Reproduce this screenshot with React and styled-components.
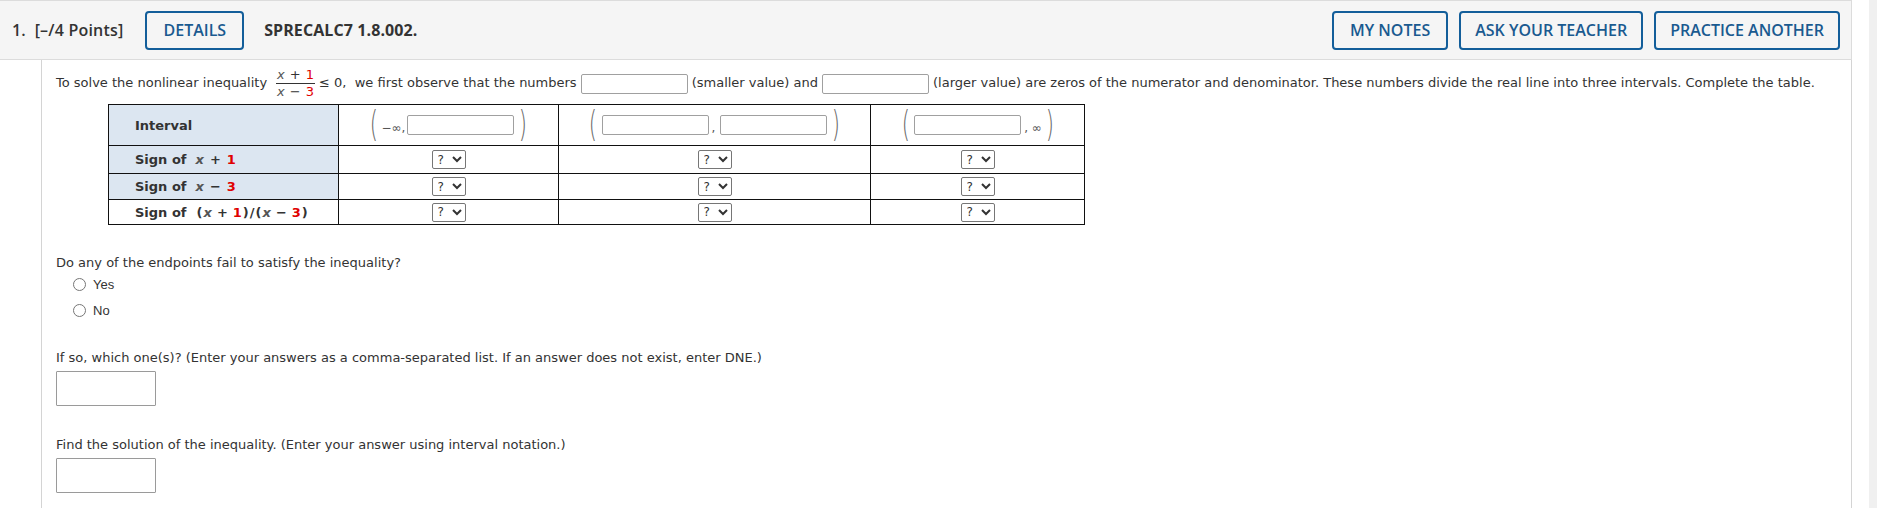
import React from 'react';
import styled, { createGlobalStyle } from 'styled-components';

const GlobalStyle = createGlobalStyle`
  html, body { margin: 0; padding: 0; background: #fff; }
  body { font-family: "DejaVu Sans", Verdana, sans-serif; color: #333; }
`;

const Page = styled.div`
  display: flex;
  width: 1877px;
  height: 508px;
  overflow: hidden;
`;

const Main = styled.div`
  width: 1852px;
  display: flex;
  flex-direction: column;
`;

const Gutter = styled.div`
  width: 17px;
`;

const ScrollStrip = styled.div`
  width: 8px;
  background: #f0f0f0;
`;

const Header = styled.header`
  height: 58px;
  flex: none;
  background: #f5f5f5;
  border-top: 1px solid #dcdcdc;
  border-bottom: 1px solid #dcdcdc;
  border-right: 1px solid #dcdcdc;
  display: flex;
  align-items: center;
  padding: 0 11px 0 12px;
  font-family: "Open Sans", sans-serif;
`;

const QNumber = styled.span`
  font-size: 16px;
  font-weight: 600;
  letter-spacing: 0.2px;
  color: #333;
  margin-right: 22px;
  white-space: nowrap;
`;

const Ref = styled.span`
  font-size: 16px;
  font-weight: 700;
  letter-spacing: 0.1px;
  color: #333;
  margin-left: 20px;
`;

const Spacer = styled.div`
  flex: 1;
`;

const HeadButton = styled.button`
  height: 39px;
  box-sizing: border-box;
  padding: 0 ${(p) => p.$pad || 16}px;
  margin-left: ${(p) => p.$gap || 0}px;
  background: #f5f5f5;
  border: 2px solid #135e9a;
  border-radius: 4px;
  color: #1a5a90;
  font-family: "Open Sans", sans-serif;
  font-size: 16px;
  font-weight: 600;
  white-space: nowrap;
`;

const Content = styled.main`
  flex: 1;
  margin-left: 41px;
  border-left: 1px solid #d4d4d4;
  border-right: 1px solid #d4d4d4;
  padding: 8px 15px 0 14px;
  font-size: 13px;
  color: #333;
`;

const Prompt = styled.p`
  margin: ${(p) => p.$top || 0}px 0 0 0;
  line-height: 16px;
  white-space: nowrap;
`;

const Frac = styled.span`
  display: inline-flex;
  flex-direction: column;
  align-items: center;
  vertical-align: middle;
  margin: 0 4px 0 9px;
  line-height: 14px;
`;

const FracPart = styled.span`
  padding: 0 1px;
  ${(p) => p.$top && 'border-bottom: 1px solid #333; padding-bottom: 1px; margin-bottom: 1px;'}
`;

const Var = styled.i`
  font-style: italic;
  font-family: "DejaVu Sans", sans-serif;
  color: #555;
`;

const Op = styled.span`
  margin: 0 ${(p) => p.$m ?? 3}px;
`;

const Num = styled.span`
  color: #e00000;
  font-weight: ${(p) => (p.$bold ? 700 : 400)};
`;

const InlineInput = styled.input`
  box-sizing: border-box;
  width: ${(p) => p.$w || 107}px;
  flex: none;
  height: 20px;
  border: 1px solid #a0a0a0;
  border-radius: 2px;
  vertical-align: middle;
  margin: 0 ${(p) => p.$mr ?? 4}px 0 ${(p) => p.$ml ?? 4}px;
  padding: 0;
  background: #fff;
`;

const Table = styled.table`
  border-collapse: collapse;
  margin: 5px 0 0 52px;
  font-size: 13px;
`;

const Row = styled.tr`
  height: ${(p) => p.$h}px;
`;

const LabelCell = styled.td`
  width: 203px;
  padding: 0 0 0 26px;
  border: 1px solid #111;
  background: ${(p) => (p.$plain ? '#fff' : '#dce6f1')};
  font-weight: 700;
  color: #333;
  white-space: nowrap;
`;

const Cell = styled.td`
  width: ${(p) => p.$w}px;
  padding: 0;
  border: 1px solid #111;
  text-align: center;
  vertical-align: middle;
`;

const IntervalBox = styled.div`
  display: flex;
  align-items: center;
  justify-content: center;
  font-size: 12px;
  color: #555;
`;

const Paren = styled.span`
  font-family: "DejaVu Sans", sans-serif;
  font-weight: 200;
  font-size: 35px;
  line-height: 38px;
  color: #666;
  transform: scaleX(0.6);
  display: inline-block;
  margin-top: -3px;
`;

const Sep = styled.span`
  font-size: 12px;
  color: #555;
  margin: 6px 1px 0 1px;
`;

const Select = styled.select`
  font-family: "DejaVu Sans", sans-serif;
  font-size: 12px;
  height: 19px;
  padding: 0 0 0 1px;
  border: 1px solid #767676;
  border-radius: 2px;
  background: #fff;
  color: #333;
  vertical-align: middle;
`;

const Options = styled.div`
  display: flex;
  flex-direction: column;
  gap: 10px;
  margin: 5px 0 0 17px;
`;

const Option = styled.label`
  display: flex;
  align-items: center;
  height: 16px;
  font-family: "Liberation Sans", Arial, sans-serif;
  font-size: 13px;
  color: #333;
`;

const Radio = styled.input`
  width: 13px;
  height: 13px;
  margin: 0 7px 0 0;
`;

const AnswerBox = styled.input`
  display: block;
  box-sizing: border-box;
  width: 100px;
  height: 35px;
  margin-top: 5px;
  border: 1px solid #9a9a9a;
  border-radius: 1px;
  padding: 0;
  background: #fff;
`;

const SignSelect = () => (
  <Select defaultValue="?">
    <option value="?">?</option>
    <option value="+">+</option>
    <option value="-">−</option>
  </Select>
);

export default function App() {
  const cols = [219, 311, 213];
  const signRows = [
    {
      h: 28,
      label: (
        <>
          Sign of&nbsp; <Var>x</Var><Op $m={6}>+</Op><Num $bold>1</Num>
        </>
      ),
    },
    {
      h: 26,
      label: (
        <>
          Sign of&nbsp; <Var>x</Var><Op $m={6}>−</Op><Num $bold>3</Num>
        </>
      ),
    },
    {
      h: 25,
      plain: true,
      label: (
        <>
          Sign of&nbsp; <Op $m={1}>(</Op><Var>x</Var><Op $m={5}>+</Op><Num $bold>1</Num><Op $m={1}>)</Op>/<Op $m={1}>(</Op><Var>x</Var><Op $m={5}>−</Op><Num $bold>3</Num><Op $m={1}>)</Op>
        </>
      ),
    },
  ];

  return (
    <>
      <GlobalStyle />
      <Page>
        <Main>
          <Header>
            <QNumber>1.&nbsp; [–/4 Points]</QNumber>
            <HeadButton $pad={16}>DETAILS</HeadButton>
            <Ref>SPRECALC7 1.8.002.</Ref>
            <Spacer />
            <HeadButton $pad={16}>MY NOTES</HeadButton>
            <HeadButton $pad={14} $gap={11}>ASK YOUR TEACHER</HeadButton>
            <HeadButton $pad={14} $gap={11}>PRACTICE ANOTHER</HeadButton>
          </Header>
          <Content>
            <Prompt>
              To solve the nonlinear inequality
              <Frac>
                <FracPart $top>
                  <Var>x</Var><Op $m={5}>+</Op><Num>1</Num>
                </FracPart>
                <FracPart>
                  <Var>x</Var><Op $m={5}>−</Op><Num>3</Num>
                </FracPart>
              </Frac>
              ≤ 0,&nbsp; we first observe that the numbers
              <InlineInput $w={107} />
              (smaller value) and
              <InlineInput $w={107} />
              (larger value) are zeros of the numerator and denominator. These numbers divide the real line into three intervals. Complete the table.
            </Prompt>

            <Table>
              <tbody>
                <Row $h={41}>
                  <LabelCell>Interval</LabelCell>
                  <Cell $w={cols[0]}>
                    <IntervalBox>
                      <Paren>(</Paren>
                      <Sep>−∞,</Sep>
                      <InlineInput $w={107} $ml={1} $mr={2} />
                      <Paren>)</Paren>
                    </IntervalBox>
                  </Cell>
                  <Cell $w={cols[1]}>
                    <IntervalBox>
                      <Paren>(</Paren>
                      <InlineInput $w={107} $ml={2} $mr={2} />
                      <Sep>,</Sep>
                      <InlineInput $w={107} $ml={4} $mr={2} />
                      <Paren>)</Paren>
                    </IntervalBox>
                  </Cell>
                  <Cell $w={cols[2]}>
                    <IntervalBox>
                      <Paren>(</Paren>
                      <InlineInput $w={107} $ml={2} $mr={2} />
                      <Sep>, ∞</Sep>
                      <Paren>)</Paren>
                    </IntervalBox>
                  </Cell>
                </Row>
                {signRows.map((r, i) => (
                  <Row key={i} $h={r.h}>
                    <LabelCell $plain={r.plain}>{r.label}</LabelCell>
                    {cols.map((w, j) => (
                      <Cell key={j} $w={w}>
                        <SignSelect />
                      </Cell>
                    ))}
                  </Row>
                ))}
              </tbody>
            </Table>

            <Prompt $top={30}>Do any of the endpoints fail to satisfy the inequality?</Prompt>
            <Options>
              <Option>
                <Radio type="radio" name="endpoints" />
                Yes
              </Option>
              <Option>
                <Radio type="radio" name="endpoints" />
                No
              </Option>
            </Options>

            <Prompt $top={32}>
              If so, which one(s)? (Enter your answers as a comma-separated list. If an answer does not exist, enter DNE.)
            </Prompt>
            <AnswerBox />

            <Prompt $top={31}>Find the solution of the inequality. (Enter your answer using interval notation.)</Prompt>
            <AnswerBox />
          </Content>
        </Main>
        <Gutter />
        <ScrollStrip />
      </Page>
    </>
  );
}
